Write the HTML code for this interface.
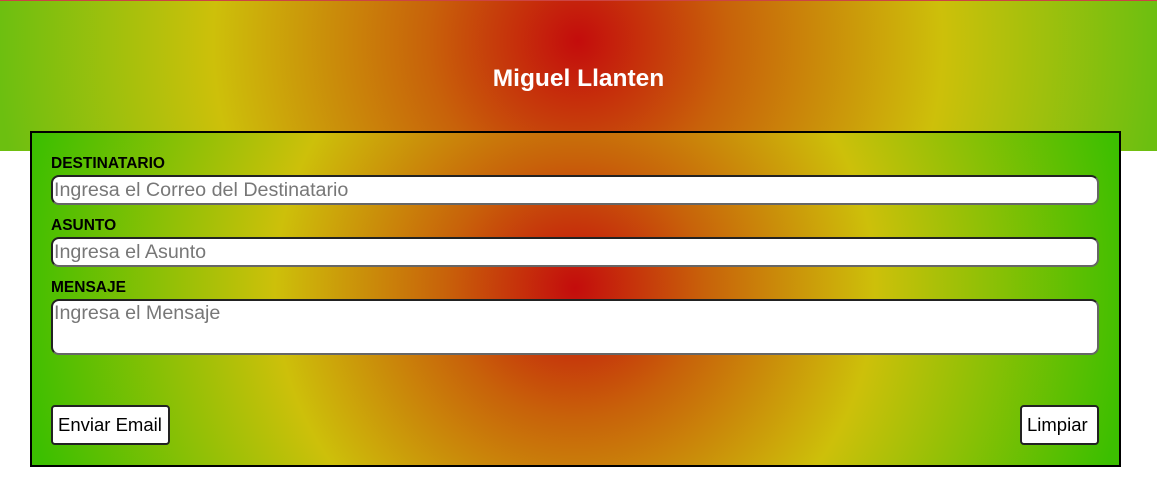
<!DOCTYPE html>
<html><head><style>
*{box-sizing:border-box}
body{margin:0;width:1157px;height:491px;background:#fff;font-family:"Liberation Sans",sans-serif;position:relative;overflow:hidden}
.hdr{position:absolute;left:0;top:0;width:1157px;height:151px;background:radial-gradient(circle at 578px 40px,#c40c0c 0px,#c8620a 150px,#cdc00a 365px,#6cbf10 580px);border-top:1px solid #c44}
.hdr h1{margin:0;position:absolute;top:64px;width:100%;text-align:center;color:#fff;font-size:24.5px;font-weight:bold}
.box{position:absolute;left:30px;top:131px;width:1091px;height:336px;border:2px solid #000;background:radial-gradient(circle at 543px 155px,#c40c0c 0px,#c8620a 130px,#cdc00a 300px,#3cbf00 560px)}
label{position:absolute;left:19px;font-size:15.5px;font-weight:bold;color:#000}
.in{position:absolute;left:19px;width:1048px;height:30px;background:#fff;border:2px solid #222;border-right-color:#666;border-bottom-color:#666;border-radius:8px;color:#777;font-size:19.7px;padding:0 0 0 1px;line-height:26px}
.btn{position:absolute;top:272px;height:40px;background:#fff;border:2px solid #222;border-radius:4px;font-size:18.5px;line-height:36px;padding:0 5px;color:#000}
</style></head><body>
<div class="hdr"><h1>Miguel Llanten</h1></div>
<div class="box">
<label style="top:22px">DESTINATARIO</label>
<div class="in" style="top:42px">Ingresa el Correo del Destinatario</div>
<label style="top:84px">ASUNTO</label>
<div class="in" style="top:104px">Ingresa el Asunto</div>
<label style="top:146px">MENSAJE</label>
<div class="in" style="top:166px;height:56px;line-height:24px">Ingresa el Mensaje</div>
<div class="btn" style="left:19px;width:119px">Enviar Email</div>
<div class="btn" style="left:988px;width:79px">Limpiar</div>
</div>
</body></html>
